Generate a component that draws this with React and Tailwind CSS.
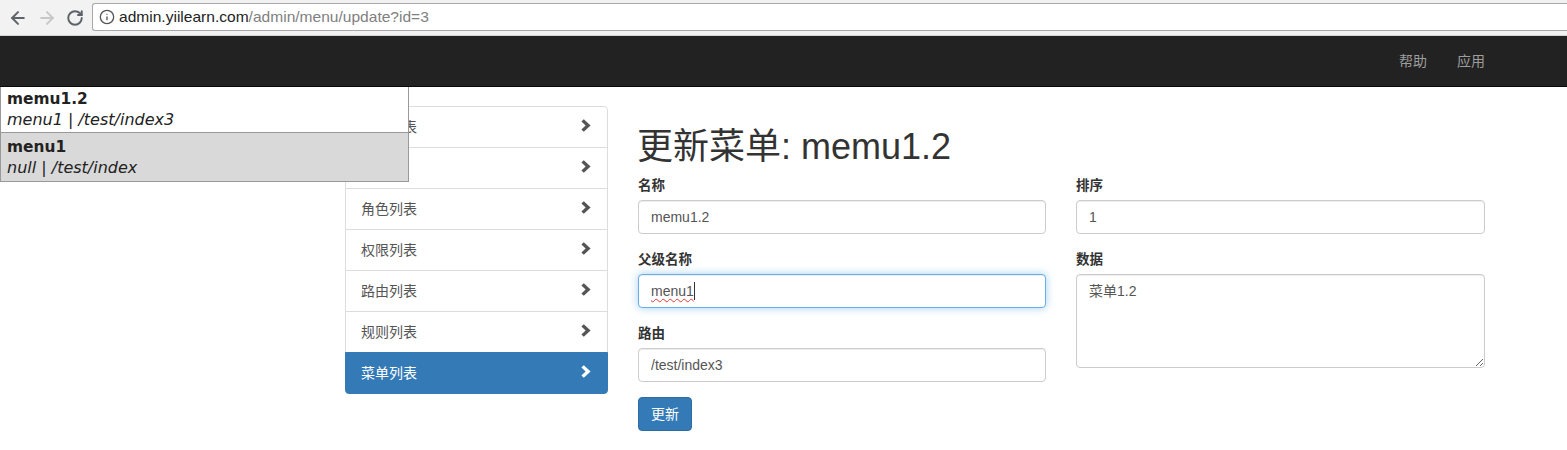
import { ArrowLeft, ArrowRight, RotateCw, Info } from 'lucide-react';

const menuItems = ['用户列表', '分配', '角色列表', '权限列表', '路由列表', '规则列表', '菜单列表'];

const inputClass =
  'block w-full h-[34px] px-3 text-sm text-[#555] bg-white border border-[#ccc] rounded outline-none shadow-[inset_0_1px_1px_rgba(0,0,0,0.075)]';

function Chevron({ className = '' }) {
  return (
    <svg viewBox="0 0 10 13" className={`w-[10px] h-[13px] ${className}`}>
      <path d="M2.8 0.2 L9.6 6.4 L2.8 12.8 L0.4 10.4 L4.6 6.4 L0.4 2.6 Z" fill="currentColor" />
    </svg>
  );
}

function Field({ label, children }) {
  return (
    <div className="mb-[15px]">
      <label className="block h-5 mb-[5px] text-[13.5px] leading-[22px] font-bold text-[#333]">{label}</label>
      {children}
    </div>
  );
}

export default function App() {
  return (
    <div className="relative h-[450px] overflow-hidden bg-white font-['Liberation_Sans','Noto_Sans_CJK_SC',sans-serif]">
      {/* Browser toolbar */}
      <div className="flex h-9 items-center bg-[#f2f2f2] border-b border-[#d4d4d4]">
        <div className="flex items-center w-[92px] pl-[8px] gap-[9px] text-[#5f6368] shrink-0">
          <ArrowLeft size={20} strokeWidth={2.4} />
          <ArrowRight size={20} strokeWidth={2.4} className="text-[#c8c8c8]" />
          <RotateCw size={18} strokeWidth={2.6} />
        </div>
        <div className="flex items-center flex-1 h-[28px] mb-[1px] pl-[6px] bg-white border border-[#a9a9a9] border-r-0 rounded-l-[3px] text-[15.55px]">
          <Info size={16} strokeWidth={2} className="text-[#555] mr-[4px]" />
          <span className="text-[#222]">admin.yiilearn.com</span>
          <span className="text-[#808080]">/admin/menu/update?id=3</span>
        </div>
      </div>

      {/* Navbar */}
      <nav className="flex h-[51px] items-center justify-end gap-[30px] pr-[82px] bg-[#222] border-b border-[#080808] text-sm text-[#9d9d9d]">
        <span>帮助</span>
        <span>应用</span>
      </nav>

      {/* Autocomplete dropdown over the page */}
      <div className="absolute left-0 top-[87px] z-10 w-[409px] bg-white border-x border-b border-[#999] font-['DejaVu_Sans','Noto_Sans_CJK_SC',sans-serif] text-[#222]">
        <div className="h-[45px] px-[6px] pt-[3px]">
          <div className="font-bold text-[15.4px] leading-[19px]">memu1.2</div>
          <div className="italic text-base leading-[21px]">menu1 | /test/index3</div>
        </div>
        <div className="h-[49px] px-[6px] pt-[5px] bg-[#d9d9d9] border-t border-[#999]">
          <div className="font-bold text-[15.4px] leading-[19px]">menu1</div>
          <div className="italic text-base leading-[21px]">null | /test/index</div>
        </div>
      </div>

      <main className="flex items-start pt-[19px] pl-[345px] pr-[82px] gap-[30px]">
        {/* Sidebar */}
        <div className="w-[263px] shrink-0 text-sm">
          {menuItems.map((item, i) => {
            const active = i === menuItems.length - 1;
            return (
              <div
                key={item}
                className={`flex items-center justify-between h-[42px] pl-[15px] pr-[16px] border ${
                  i > 0 ? '-mt-px' : 'rounded-t'
                } ${active ? 'bg-[#337ab7] border-[#337ab7] text-white rounded-b relative' : 'bg-white border-[#ddd] text-[#555]'}`}
              >
                <span>{item}</span>
                <Chevron className={`mb-1 ${active ? 'text-white' : 'text-[#555]'}`} />
              </div>
            );
          })}
        </div>

        {/* Form */}
        <div className="flex-1 min-w-0">
          <h1 className="mt-[21px] mb-[8px] -ml-px text-4xl leading-[40px] font-normal text-[#333]">更新菜单: memu1.2</h1>
          <div className="flex gap-[30px]">
            <div className="w-[408px]">
              <Field label="名称">
                <input readOnly defaultValue="memu1.2" className={inputClass} />
              </Field>
              <Field label="父级名称">
                <div className="flex items-center h-[34px] px-3 text-sm text-[#555] bg-white border border-[#66afe9] rounded shadow-[inset_0_1px_1px_rgba(0,0,0,0.075),0_0_8px_rgba(102,175,233,0.6)]">
                  <span className="underline decoration-wavy decoration-[#e53935] decoration-1 underline-offset-2">menu1</span>
                  <span className="w-px h-[18px] bg-[#333]" />
                </div>
              </Field>
              <Field label="路由">
                <input readOnly defaultValue="/test/index3" className={inputClass} />
              </Field>
              <button className="h-[34px] w-[54px] text-sm text-white bg-[#337ab7] border border-[#2e6da4] rounded">更新</button>
            </div>
            <div className="w-[409px]">
              <Field label="排序">
                <input readOnly defaultValue="1" className={inputClass} />
              </Field>
              <Field label="数据">
                <textarea
                  readOnly
                  defaultValue="菜单1.2"
                  className="block w-full h-[94px] px-3 py-[6px] text-sm leading-5 text-[#555] bg-white border border-[#ccc] rounded outline-none shadow-[inset_0_1px_1px_rgba(0,0,0,0.075)]"
                />
              </Field>
            </div>
          </div>
        </div>
      </main>
    </div>
  );
}
